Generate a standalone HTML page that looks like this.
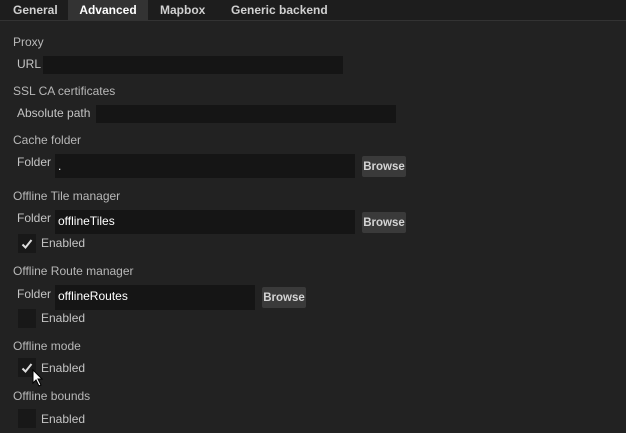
<!DOCTYPE html>
<html><head><style>
*{margin:0;padding:0;box-sizing:border-box}
body{width:626px;height:433px;background:#222;font-family:"Liberation Sans",sans-serif;font-size:12px;color:#c4c4c4;position:relative;overflow:hidden}
.a{position:absolute;white-space:nowrap;line-height:14px}
.tabs{position:absolute;left:0;top:0;width:626px;height:21px;background:#1d1d1d;border-bottom:1px solid #333}
.t{position:absolute;top:0;height:21px;line-height:21px;font-weight:bold;color:#d0d0d0;font-size:12px}
.in{position:absolute;background:#151515}
.btn{position:absolute;background:#3a3a3a;border-radius:2px;color:#d4d4d4;font-weight:bold;font-size:11.5px;text-align:center;line-height:23px;width:44px;height:21px}
.cb{position:absolute;left:18px;width:18px;height:19px;background:#181818}
.lab{color:#b8b8b8}
.v{color:#fff}
</style></head><body>
<div class="tabs">
<div class="t" style="left:13px">General</div>
<div class="t" style="left:68px;width:80px;background:#333;text-align:center;color:#fff">Advanced</div>
<div class="t" style="left:160px">Mapbox</div>
<div class="t" style="left:231px">Generic backend</div>
</div>

<div class="a lab" style="left:13px;top:35px">Proxy</div>
<div class="a" style="left:17px;top:57px">URL</div>
<div class="in" style="left:43px;top:56px;width:300px;height:18px"></div>

<div class="a lab" style="left:13px;top:84px">SSL CA certificates</div>
<div class="a" style="left:17px;top:106px">Absolute path</div>
<div class="in" style="left:96px;top:105px;width:300px;height:18px"></div>

<div class="a lab" style="left:13px;top:133px">Cache folder</div>
<div class="a" style="left:17px;top:155px">Folder</div>
<div class="in" style="left:55px;top:154px;width:300px;height:24px"></div>
<div class="a v" style="left:58px;top:159px">.</div>
<div class="btn" style="left:362px;top:156px">Browse</div>

<div class="a lab" style="left:13px;top:189px">Offline Tile manager</div>
<div class="a" style="left:17px;top:211px">Folder</div>
<div class="in" style="left:55px;top:210px;width:300px;height:24px"></div>
<div class="a v" style="left:58px;top:214px">offlineTiles</div>
<div class="btn" style="left:362px;top:212px">Browse</div>
<div class="cb" style="top:234px"></div>
<svg style="position:absolute;left:21px;top:238px" width="12" height="12"><path d="M1.5 6.5 L4.5 9.5 L10.5 2" fill="none" stroke="#ddd" stroke-width="2"/></svg>
<div class="a" style="left:41px;top:236px">Enabled</div>

<div class="a lab" style="left:13px;top:264px">Offline Route manager</div>
<div class="a" style="left:17px;top:287px">Folder</div>
<div class="in" style="left:55px;top:285px;width:200px;height:25px"></div>
<div class="a v" style="left:58px;top:289px">offlineRoutes</div>
<div class="btn" style="left:262px;top:287px">Browse</div>
<div class="cb" style="top:309px"></div>
<div class="a" style="left:41px;top:311px">Enabled</div>

<div class="a lab" style="left:13px;top:339px">Offline mode</div>
<div class="cb" style="top:358px"></div>
<svg style="position:absolute;left:21px;top:362px" width="12" height="12"><path d="M1.5 6.5 L4.5 9.5 L10.5 2" fill="none" stroke="#ddd" stroke-width="2"/></svg>
<div class="a" style="left:41px;top:361px">Enabled</div>
<svg style="position:absolute;left:32px;top:369px" width="12" height="18"><path d="M1 1 L1 14 L4 11 L7 17 L9 16 L6 10 L10 10 Z" fill="#fff" stroke="#000" stroke-width="1"/></svg>

<div class="a lab" style="left:13px;top:389px">Offline bounds</div>
<div class="cb" style="top:409px"></div>
<div class="a" style="left:41px;top:412px">Enabled</div>
</body></html>
